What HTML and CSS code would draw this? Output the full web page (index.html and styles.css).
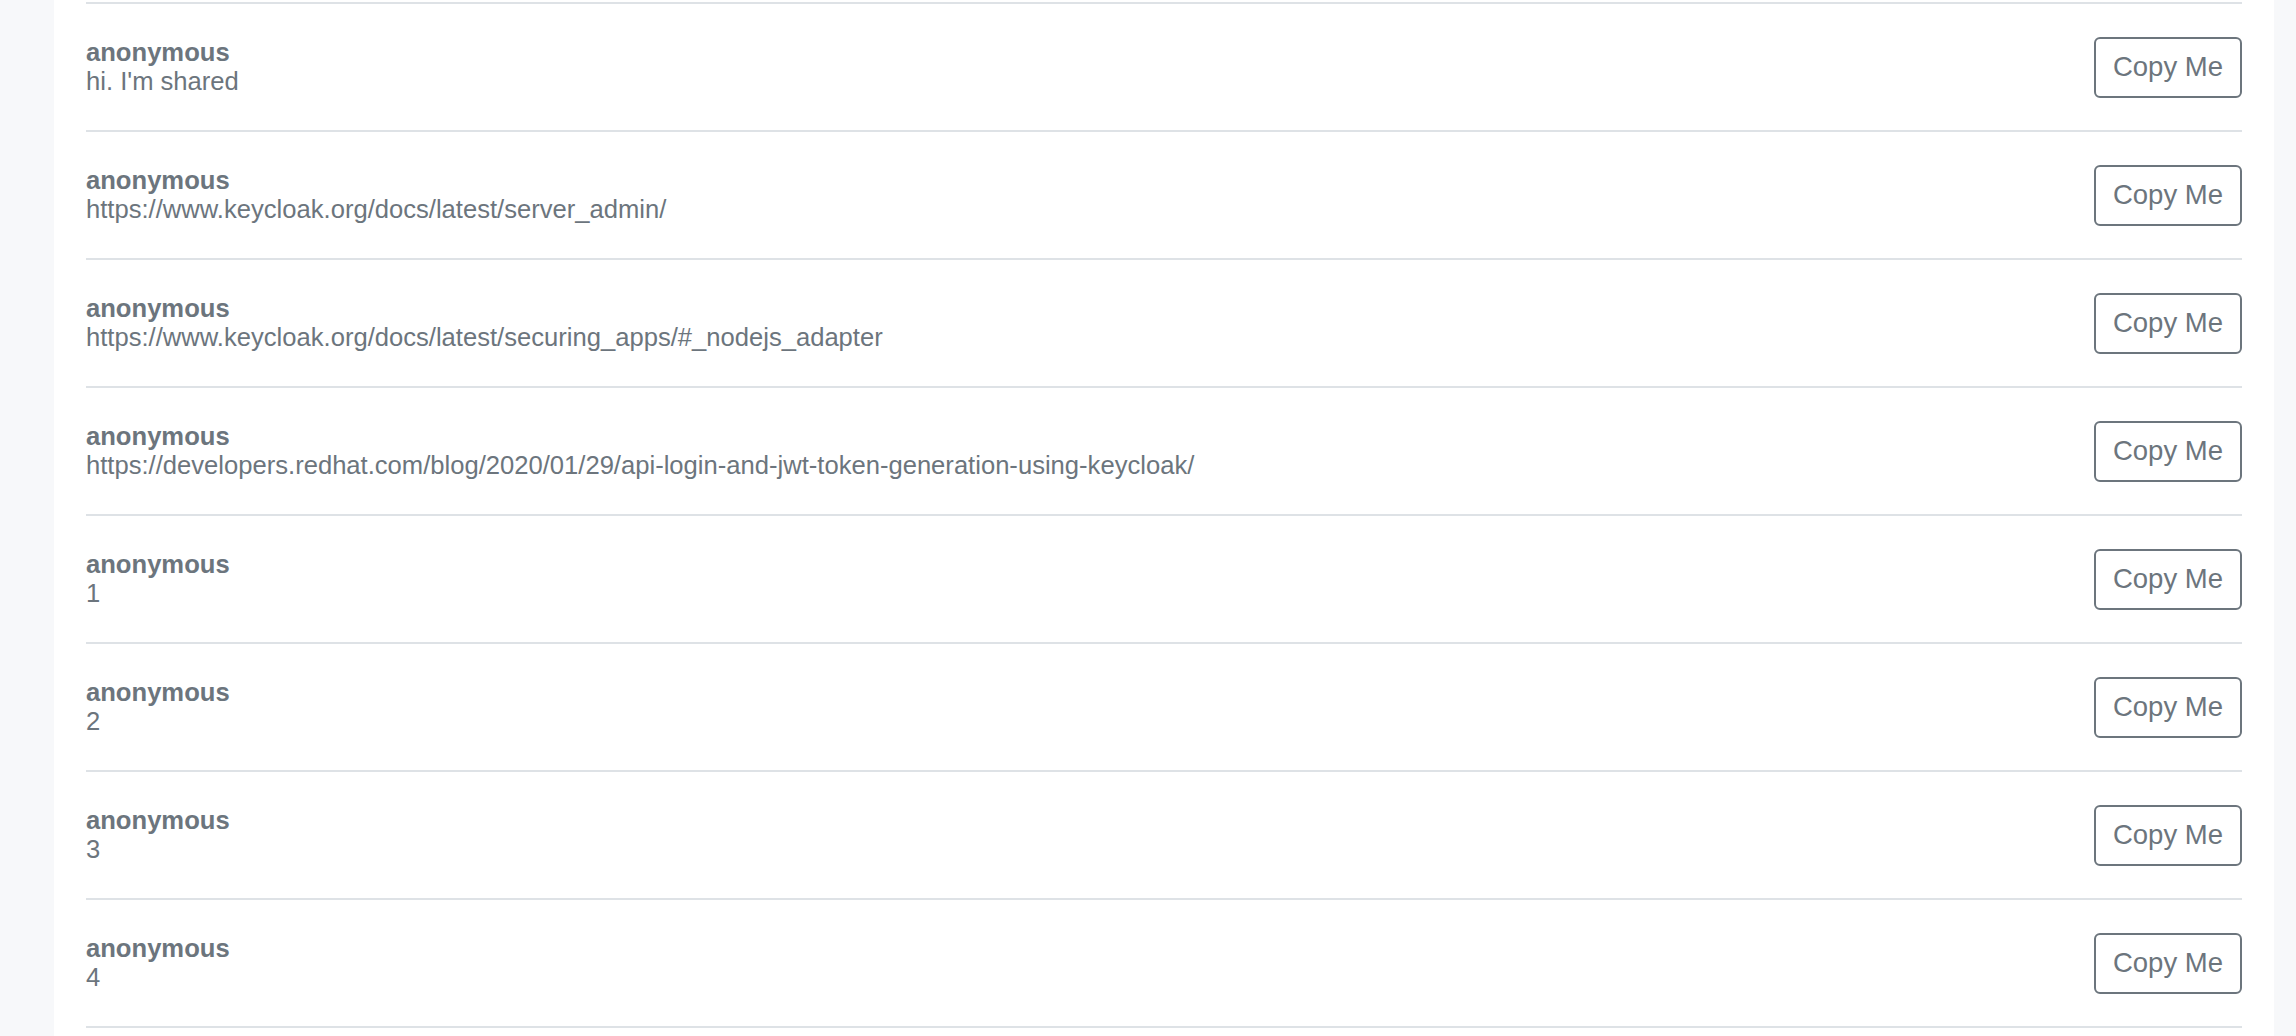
FILE: index.html
```html
<!DOCTYPE html>
<html lang="en">
<head>
<meta charset="utf-8">
<title>Shared messages</title>
<link rel="stylesheet" href="styles.css">
</head>
<body>
<main class="card">
  <ul class="list">
    <li class="row"><div class="msg"><div class="author">anonymous</div><div class="text">hi. I'm shared</div></div><button class="btn">Copy Me</button></li>
    <li class="row"><div class="msg"><div class="author">anonymous</div><div class="text">https://www.keycloak.org/docs/latest/server_admin/</div></div><button class="btn">Copy Me</button></li>
    <li class="row"><div class="msg"><div class="author">anonymous</div><div class="text">https://www.keycloak.org/docs/latest/securing_apps/#_nodejs_adapter</div></div><button class="btn">Copy Me</button></li>
    <li class="row"><div class="msg"><div class="author">anonymous</div><div class="text">https://developers.redhat.com/blog/2020/01/29/api-login-and-jwt-token-generation-using-keycloak/</div></div><button class="btn">Copy Me</button></li>
    <li class="row"><div class="msg"><div class="author">anonymous</div><div class="text">1</div></div><button class="btn">Copy Me</button></li>
    <li class="row"><div class="msg"><div class="author">anonymous</div><div class="text">2</div></div><button class="btn">Copy Me</button></li>
    <li class="row"><div class="msg"><div class="author">anonymous</div><div class="text">3</div></div><button class="btn">Copy Me</button></li>
    <li class="row"><div class="msg"><div class="author">anonymous</div><div class="text">4</div></div><button class="btn">Copy Me</button></li>
  </ul>
</main>
</body>
</html>
```
FILE: styles.css
```css
html, body {
  margin: 0;
  padding: 0;
  height: 100%;
  overflow: hidden;
}
body {
  background: #f7f8fa;
  font-family: "Liberation Sans", Arial, Helvetica, sans-serif;
  color: #6c757d;
}
.card {
  background: #ffffff;
  margin: 0 22px 0 54px;
  padding: 2px 32px 0 32px;
  min-height: 100%;
  box-sizing: border-box;
}
.list {
  list-style: none;
  margin: 0;
  padding: 0;
  border-bottom: 2px solid #dee2e6;
}
.row {
  display: flex;
  align-items: center;
  justify-content: space-between;
  border-top: 2px solid #dee2e6;
  padding: 32.5px 0 32.5px 0;
}
.msg {
  font-size: 25.6px;
  line-height: 29.5px;
}
.author {
  font-weight: bold;
}
.btn {
  font-family: "Liberation Sans", Arial, Helvetica, sans-serif;
  font-size: 27.5px;
  line-height: 38.4px;
  color: #6c757d;
  background: #ffffff;
  border: 2px solid #6c757d;
  border-radius: 6px;
  padding: 9.3px 17px;
  height: 61px;
  box-sizing: border-box;
  cursor: pointer;
}
```
